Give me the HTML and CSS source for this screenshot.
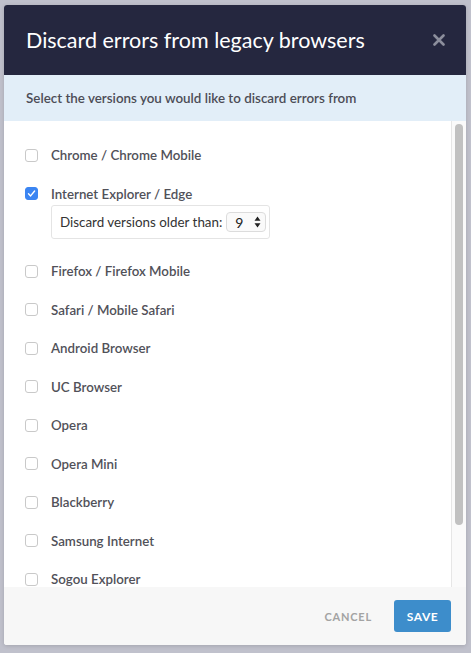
FILE: index.html
```html
<!DOCTYPE html>
<html>
<head>
<meta charset="utf-8">
<link rel="stylesheet" href="styles.css">
</head>
<body>
<div class="modal">
  <div class="modal-header">
    <h1 class="title">Discard errors from legacy browsers</h1>
    <span class="close">
      <svg width="12" height="12" viewBox="0 0 12 12"><path d="M1.5 1.5 L10.5 10.5 M10.5 1.5 L1.5 10.5" stroke="#8c8e9c" stroke-width="2.6" stroke-linecap="round"/></svg>
    </span>
  </div>
  <div class="subheader">Select the versions you would like to discard errors from</div>
  <div class="modal-body">
    <div class="list">
      <div class="item"><span class="cb"></span><span class="label">Chrome / Chrome Mobile</span></div>
      <div class="item item-open">
        <div class="row"><span class="cb checked"><svg width="9" height="9" viewBox="0 0 9 9"><path d="M1.5 4.8 L3.6 6.9 L7.6 2" fill="none" stroke="#fff" stroke-width="1.4" stroke-linecap="round" stroke-linejoin="round"/></svg></span><span class="label">Internet Explorer / Edge</span></div>
        <div class="version-box">
          <span class="vb-text">Discard versions older than:</span>
          <span class="select"><span class="select-val">9</span><svg width="7" height="12" viewBox="0 0 7 12"><path d="M3.5 0.5 L6.5 4.8 L0.5 4.8 Z M3.5 11.5 L6.5 7.2 L0.5 7.2 Z" fill="#222"/></svg></span>
        </div>
      </div>
      <div class="item"><span class="cb"></span><span class="label">Firefox / Firefox Mobile</span></div>
      <div class="item"><span class="cb"></span><span class="label">Safari / Mobile Safari</span></div>
      <div class="item"><span class="cb"></span><span class="label">Android Browser</span></div>
      <div class="item"><span class="cb"></span><span class="label">UC Browser</span></div>
      <div class="item"><span class="cb"></span><span class="label">Opera</span></div>
      <div class="item"><span class="cb"></span><span class="label">Opera Mini</span></div>
      <div class="item"><span class="cb"></span><span class="label">Blackberry</span></div>
      <div class="item"><span class="cb"></span><span class="label">Samsung Internet</span></div>
      <div class="item"><span class="cb"></span><span class="label">Sogou Explorer</span></div>
    </div>
    <div class="scrollbar"><div class="thumb"></div></div>
  </div>
  <div class="modal-footer">
    <button class="btn-cancel">CANCEL</button>
    <button class="btn-save">SAVE</button>
  </div>
</div>
</body>
</html>
```
FILE: styles.css
```css
html, body {
  margin: 0;
  padding: 0;
}
body {
  background: #c0c1cc;
  font-family: Lato, "Open Sans", sans-serif;
  width: 471px;
  height: 653px;
  overflow: hidden;
}
.modal {
  margin: 5px 0 0 4px;
  width: 462px;
  height: 640px;
  background: #fff;
  border-radius: 3px;
  overflow: hidden;
  display: flex;
  flex-direction: column;
  box-shadow: 0 1px 4px rgba(0,0,0,0.15);
}
.modal-header {
  height: 70px;
  flex: none;
  background: #25273f;
  display: flex;
  align-items: center;
  justify-content: space-between;
  padding: 0 21px 0 22px;
}
.title {
  margin: 0;
  color: #fff;
  font-size: 21.5px;
  font-weight: 400;
  letter-spacing: 0;
}
.close {
  display: flex;
  width: 12px;
  height: 12px;
}
.subheader {
  height: 46px;
  flex: none;
  background: #e2eef8;
  display: flex;
  align-items: center;
  padding: 0 22px;
  font-size: 13.4px;
  font-weight: 600;
  color: #4c4c56;
}
.modal-body {
  flex: 1;
  min-height: 0;
  display: flex;
}
.list {
  flex: 1;
  overflow: hidden;
  padding: 15px 0 0 21px;
}
.scrollbar {
  width: 14px;
  flex: none;
  background: #fafafa;
  border-left: 1px solid #e6e6e6;
  padding: 3px 3px 0 3px;
  box-sizing: border-box;
  width: 15px;
}
.thumb {
  width: 8px;
  height: 401px;
  border-radius: 4px;
  background: #c1c1c1;
}
.item {
  padding: 10px 0;
  display: flex;
  align-items: center;
  height: 18.5px;
}
.item-open {
  display: block;
  height: auto;
  padding-bottom: 12.75px;
}
.row {
  display: flex;
  align-items: center;
  height: 18.5px;
}
.cb {
  width: 13px;
  height: 13px;
  box-sizing: border-box;
  border: 1px solid #c9c9c9;
  border-radius: 3px;
  background: #fff;
  flex: none;
  display: flex;
  align-items: center;
  justify-content: center;
}
.cb.checked {
  background: #3b85f2;
  border-color: #3b85f2;
}
.label {
  margin-left: 13px;
  font-size: 13.3px;
  font-weight: 600;
  color: #515159;
  white-space: nowrap;
}
.version-box {
  margin: 2px 0 0 26px;
  width: 219px;
  height: 34px;
  box-sizing: border-box;
  border: 1px solid #e4e4e4;
  border-radius: 3px;
  display: flex;
  align-items: center;
  padding: 0 8px;
  font-size: 13.4px;
  color: #333;
  white-space: nowrap;
}
.select {
  margin-left: 4px;
  width: 40px;
  height: 20px;
  box-sizing: border-box;
  border: 1px solid #dcdcdc;
  border-radius: 4px;
  background: #fafafa;
  display: flex;
  align-items: center;
  justify-content: space-between;
  padding: 0 4px 0 8px;
  flex: none;
}
.select-val {
  font-size: 14px;
  color: #222;
}
.modal-footer {
  height: 58px;
  flex: none;
  background: #f7f7f7;
  display: flex;
  align-items: center;
  justify-content: flex-end;
  padding-right: 15px;
  gap: 22px;
}
button {
  font-family: Lato, "Open Sans", sans-serif;
  border: none;
  cursor: pointer;
}
.btn-cancel {
  background: none;
  padding: 0;
  font-size: 11px;
  font-weight: 700;
  letter-spacing: 0.8px;
  color: #a3a3a3;
}
.btn-save {
  width: 57px;
  height: 32px;
  background: #3d8dcb;
  border-radius: 3px;
  color: #fff;
  font-size: 12px;
  font-weight: 700;
  letter-spacing: 0.6px;
  padding: 0;
}
```
